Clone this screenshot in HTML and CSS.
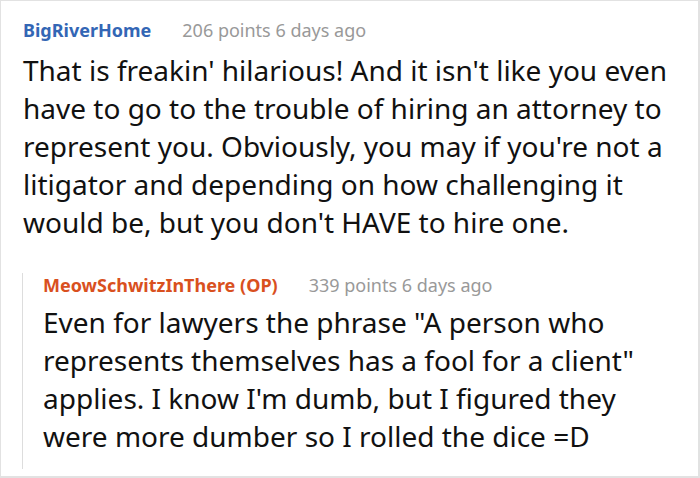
FILE: index.html
```html
<!DOCTYPE html>
<html>
<head>
<meta charset="utf-8">
<link rel="stylesheet" href="styles.css">
</head>
<body>
<div class="card">
  <div class="comment">
    <div class="meta"><span class="author">BigRiverHome</span><span class="info">206 points 6 days ago</span></div>
    <p class="text">That is freakin' hilarious! And it isn't like you even have to go to the trouble of hiring an attorney to represent you. Obviously, you may if you're not a litigator and depending on how challenging it would be, but you don't HAVE to hire one.</p>
    <div class="reply">
      <div class="meta"><span class="author op">MeowSchwitzInThere (OP)</span><span class="info">339 points 6 days ago</span></div>
      <p class="text">Even for lawyers the phrase "A person who represents themselves has a fool for a client" applies. I know I'm dumb, but I figured they were more dumber so I rolled the dice =D</p>
    </div>
  </div>
</div>
</body>
</html>
```
FILE: styles.css
```css
html, body { margin: 0; padding: 0; background: #fff; }
body { font-family: "Noto Sans", sans-serif; }
.card {
  width: 700px;
  height: 478px;
  box-sizing: border-box;
  border: 1px solid #e2e2e2;
  border-width: 1px 2px 2px 1px;
  padding: 17px 19px 0 22px;
  overflow: hidden;
}
.meta { display: flex; gap: 31px; font-size: 18px; line-height: 24px; }
.author { color: #3366b5; font-weight: 700; }
.author.op { color: #d9501e; }
.info { color: #999; }
.text { margin: 9px 0 0; font-size: 28px; line-height: 38px; color: #111; }
.reply { margin: 42px 0 0 -1px; border-left: 1px solid #ddd; padding: 0 0 14px 20px; }
.reply .meta { margin-top: -10px; }
.reply .text { margin-top: 6px; }
```
